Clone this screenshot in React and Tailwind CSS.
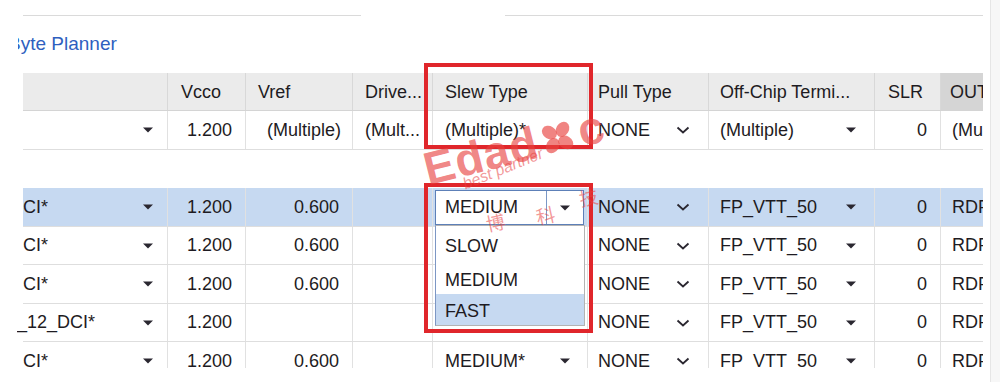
import React from "react";

const grid = "grid grid-cols-[145px_78px_107px_80px_155px_121px_166px_66px_42px]";

const headers = [
  { label: "", cls: "" },
  { label: "Vcco", cls: "pl-[13px]" },
  { label: "Vref", cls: "pl-3" },
  { label: "Drive...", cls: "pl-3" },
  { label: "Slew Type", cls: "pl-3" },
  { label: "Pull Type", cls: "pl-[10px]" },
  { label: "Off-Chip Termi...", cls: "pl-[11px]" },
  { label: "SLR", cls: "pl-[13px]" },
  { label: "OUTPUT", cls: "pl-[9px] bg-[#d5d5d5]" },
];

const rows = [
  { id: 2, h: "h-[39px]", sel: true, name: "CI*", vref: "0.600", slew: "edit", off: "FP_VTT_50", out: "RDF" },
  { id: 3, h: "h-[38px]", name: "CI*", vref: "0.600", slew: "", off: "FP_VTT_50", out: "RDF" },
  { id: 4, h: "h-[39px]", name: "CI*", vref: "0.600", slew: "", off: "FP_VTT_50", out: "RDF" },
  { id: 5, h: "h-[38px]", name: "_12_DCI*", shift: true, vref: "", slew: "", off: "FP_VTT_50", out: "RDF" },
  { id: 6, h: "h-[39px]", name: "CI*", vref: "0.600", slew: "MEDIUM*", off: "FP_VTT_50", out: "RDF" },
];

function Tri() {
  return (
    <svg width="10" height="6" viewBox="0 0 10 6" className="shrink-0">
      <path d="M0 0.5h10L5 5.5z" fill="#2a2730" />
    </svg>
  );
}

function Chev() {
  return (
    <svg width="14" height="8" viewBox="0 0 14 8" fill="none" className="shrink-0">
      <path d="M1.5 1.5 7 6.5l5.5-5" stroke="#2a2730" strokeWidth="1.8" />
    </svg>
  );
}

function Flower() {
  return (
    <svg width="36" height="36" viewBox="0 0 34 34" className="mx-[3px] mb-[4px] rotate-45">
      <ellipse cx="17" cy="8" rx="6" ry="7.5" fill="currentColor" />
      <ellipse cx="17" cy="26" rx="6" ry="7.5" fill="currentColor" />
      <ellipse cx="8" cy="17" rx="7.5" ry="6" fill="currentColor" />
      <ellipse cx="26" cy="17" rx="7.5" ry="6" fill="currentColor" />
    </svg>
  );
}

function SlewCell({ value }) {
  if (value === "edit") {
    return (
      <div className="ml-[2px] mr-[3px] mt-[1px] h-[35px] flex-1 flex border border-[#5d80b8] bg-white">
        <div className="flex-1 flex items-center pl-[9px] border-r border-[#7b98c6]">MEDIUM</div>
        <div className="w-[36px] flex items-center justify-center">
          <Tri />
        </div>
      </div>
    );
  }
  if (!value) return null;
  return (
    <div className="flex-1 flex items-center justify-between pl-3 pr-[17px]">
      <span>{value}</span>
      <Tri />
    </div>
  );
}

function Row({ r }) {
  const cell = "flex items-center border-r border-[#e1e1e1] whitespace-nowrap overflow-hidden";
  return (
    <div className={`${grid} ${r.h} border-b border-[#dedede] ${r.sel ? "bg-[#c6d9f1]" : ""}`}>
      <div className="flex items-center justify-between pr-[14px] border-r border-[#e1e1e1] whitespace-nowrap">
        <span className={r.shift ? "-ml-[6px]" : ""}>{r.name}</span>
        <Tri />
      </div>
      <div className={`${cell} justify-end pr-[13px]`}>1.200</div>
      <div className={`${cell} justify-end pr-[13px]`}>{r.vref}</div>
      <div className={cell}></div>
      <div className={cell}>
        <SlewCell value={r.slew} />
      </div>
      <div className={`${cell} justify-between pl-[10px] pr-[18px]`}>
        <span>NONE</span>
        <Chev />
      </div>
      <div className={`${cell} justify-between pl-[11px] pr-[18px]`}>
        <span>{r.off}</span>
        <Tri />
      </div>
      <div className={`${cell} justify-end pr-[13px]`}>0</div>
      <div className="flex items-center pl-[11px] overflow-hidden whitespace-nowrap">{r.out}</div>
    </div>
  );
}

export default function App() {
  return (
    <div className="relative w-[1000px] h-[382px] overflow-hidden bg-white font-['Liberation_Sans',Arial,sans-serif] text-[18px] text-[#1e1b22]">
      <div className="flex h-full">
        <div className="flex-1 flex flex-col pt-[15px]">
          <div className="flex pl-[23px]">
            <div className="w-[338px] h-px bg-[#dadada]" />
            <div className="w-[144px]" />
            <div className="w-[478px] h-px bg-[#dadada]" />
          </div>

          <div className="mt-[17px] pl-[18px]">
            <div className="overflow-hidden whitespace-nowrap h-[22px] leading-[22px] text-[19px] text-[#2f5fbf]">
              <span className="inline-block -ml-[10px]">Byte Planner</span>
            </div>
          </div>

          <div className="mt-[18px] ml-[17px] pl-[6px] w-[966px] h-[295px] overflow-hidden">
            <div className={`${grid} h-[38px] bg-[#ebebeb] border-b border-[#d4d4d4]`}>
              {headers.map((h, i) => (
                <div
                  key={i}
                  className={`flex items-center pt-[2px] whitespace-nowrap overflow-hidden ${i < 8 ? "border-r border-[#d8d8d8]" : ""} ${h.cls}`}
                >
                  {h.label}
                </div>
              ))}
            </div>

            {/* summary row */}
            <div className={`${grid} h-[39px] border-b border-[#dedede]`}>
              <div className="flex items-center justify-end pr-[14px] border-r border-[#e1e1e1]">
                <Tri />
              </div>
              <div className="flex items-center justify-end pr-[13px] border-r border-[#e1e1e1]">1.200</div>
              <div className="flex items-center justify-end pr-[11px] border-r border-[#e1e1e1]">(Multiple)</div>
              <div className="flex items-center pl-3 border-r border-[#e1e1e1] whitespace-nowrap overflow-hidden">(Mult...</div>
              <div className="flex items-center pl-3 border-r border-[#e1e1e1]">(Multiple)*</div>
              <div className="flex items-center justify-between pl-[10px] pr-[18px] border-r border-[#e1e1e1]">
                <span>NONE</span>
                <Chev />
              </div>
              <div className="flex items-center justify-between pl-[11px] pr-[18px] border-r border-[#e1e1e1]">
                <span>(Multiple)</span>
                <Tri />
              </div>
              <div className="flex items-center justify-end pr-[13px] border-r border-[#e1e1e1]">0</div>
              <div className="flex items-center pl-[11px] whitespace-nowrap overflow-hidden">(Multiple)</div>
            </div>

            <div className="h-[38px]" />

            {rows.map((r) => (
              <Row key={r.id} r={r} />
            ))}
          </div>
        </div>
        <div className="w-[10px] border-l border-[#e6e6e6] bg-[#f7f7f7]" />
      </div>

      {/* open dropdown list */}
      <div className="absolute left-[435px] top-[225px] w-[150px] h-[101px] flex flex-col bg-white border border-[#b3b3b3] border-l-[#7d97c4]">
        <div className="h-[34px] flex items-center pt-[6px] pl-[9px]">SLOW</div>
        <div className="h-[34px] flex items-center pt-[6px] pl-[9px]">MEDIUM</div>
        <div className="flex-1 flex items-center pt-[4px] pl-[9px] bg-[#c6d9f1]">FAST</div>
      </div>

      {/* annotation boxes */}
      <div className="absolute left-[424px] top-[63px] w-[169px] h-[86px] border-4 border-[#e0262b]" />
      <div className="absolute left-[424px] top-[183px] w-[169px] h-[150px] border-4 border-[#e0262b]" />

      {/* watermark */}
      <div className="pointer-events-none absolute left-[430px] top-[146px] w-[190px] h-[46px] origin-bottom-left -rotate-[14deg] flex items-end text-[#e8423f]/65 font-bold text-[46px] leading-none tracking-[1px]">
        <span>Edad</span>
        <Flower />
        <span>c</span>
      </div>
      <div className="pointer-events-none absolute left-[468px] top-[172px] origin-bottom-left -rotate-[22deg] text-[16px] italic text-[#e8423f]/55 whitespace-nowrap">
        best partner
      </div>
      <div className="pointer-events-none absolute left-[486px] top-[208px] -rotate-[12deg] text-[19px] text-[#e8423f]/55 font-['Noto_Sans_CJK_SC',sans-serif]">
        博
      </div>
      <div className="pointer-events-none absolute left-[536px] top-[201px] -rotate-[12deg] text-[19px] text-[#e8423f]/55 font-['Noto_Sans_CJK_SC',sans-serif]">
        科
      </div>
      <div className="pointer-events-none absolute left-[579px] top-[183px] -rotate-[12deg] text-[19px] text-[#e8423f]/55 font-['Noto_Sans_CJK_SC',sans-serif]">
        技
      </div>
    </div>
  );
}
